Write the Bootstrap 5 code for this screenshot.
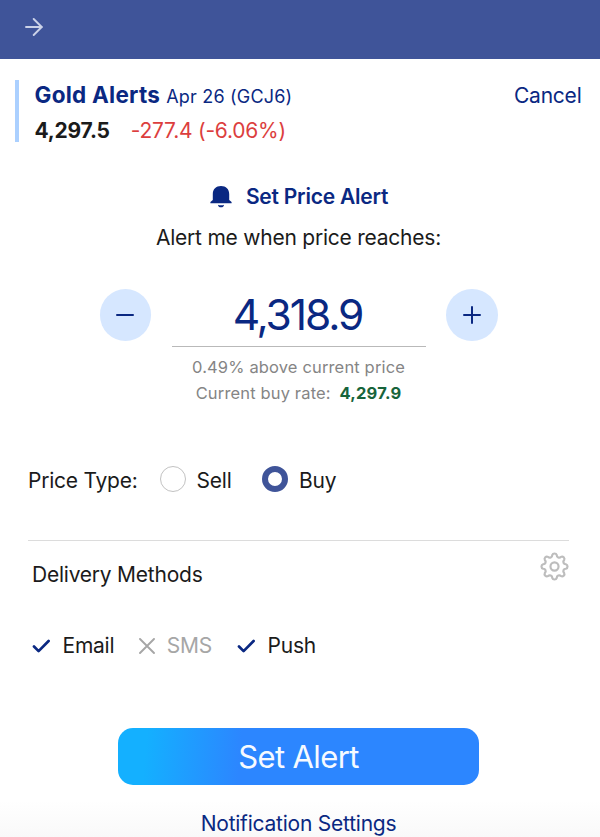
<!DOCTYPE html>
<html lang="en">
<head>
<meta charset="utf-8">
<meta name="viewport" content="width=device-width, initial-scale=1">
<title>Gold Alerts</title>
<link href="https://cdn.jsdelivr.net/npm/bootstrap@5.3.0/dist/css/bootstrap.min.css" rel="stylesheet">
<style>
body{font-family:Inter,"Liberation Sans",sans-serif;color:#1b1b1b;font-size:21px;line-height:30px;letter-spacing:-.23px;height:837px;overflow:hidden;background:linear-gradient(#fff 800px,#f9f9f9 837px)}
svg{display:block;flex:none}
.navy{color:#0a2882}
.topbar{height:59px;background:#3f5499;padding:0 0 5px 25px}
.instrument{margin:21px 18.5px 0 15px;height:62px;border-left:4.5px solid #abd0ff;padding-left:15.5px}
.title{font-size:22.5px;line-height:30px;letter-spacing:.25px}
.contract{font-size:18px;letter-spacing:.2px;margin-left:6px}
.quote-row{line-height:30px;margin-top:3.500px}
.change{color:#dc3e3e;margin-left:21px}
.cancel{line-height:31px}
.set-title{margin-top:40px;padding-right:2px;gap:14px;font-size:inherit;line-height:inherit}
.prompt{margin-top:11px;padding-right:3px}
.stepper{margin-top:36px;padding:0 102.5px 0 99.5px}
.round{width:51.5px;height:51.5px;background:#d6e7ff;border:0}
.amount{width:254px;border-bottom:1.5px solid #b9b9b9;height:58px;font-size:42.5px;line-height:52px;letter-spacing:-2.1px;padding-right:2px}
.hint{font-size:16.5px;line-height:26px;letter-spacing:.15px;color:#858585;padding-right:3px;margin-top:7px}
.rate{color:#17643b;margin-left:4px;letter-spacing:.2px}
.types{margin:60px 0 0 28px;height:26px}
.types .caption-text{padding-top:3px}
.dot{width:26px;height:26px;border:1.5px solid #c2c2c2;border-radius:50%}
.dot.off-state{margin-left:22px}
.dot.on{border:6.5px solid #3f5499;margin-left:30.5px}
.choice{margin-left:11px}
.delivery{margin:48px 31px 0 28px;border-top:1.5px solid #dcdcdc;height:68px;padding:11px 0 0 4px}
.delivery .caption-text{padding-top:8px}
.methods{margin:23px 0 0 32px}
.methods span{margin:0 25px 0 11.5px}
.methods .off{color:#a6a6a6}
.submit,.submit:hover{width:361px;height:57px;border:0;border-radius:15px;color:#f6faff;font-size:31px;line-height:58px;letter-spacing:-.6px;padding:0;margin:67px auto 0 118px;background:linear-gradient(95deg,#14b0ff 8%,#2c86ff 34%)}
.settings{margin-top:24px;padding-right:3px}
</style>
<script src="https://cdn.jsdelivr.net/npm/bootstrap@5.3.0/dist/js/bootstrap.bundle.min.js" defer></script>
</head>
<body>
<header class="topbar d-flex align-items-center">
  <svg width="18" height="18" viewBox="0 0 18 18" fill="none" stroke="#cbd2e8" stroke-width="1.9" stroke-linecap="round" stroke-linejoin="round"><path d="M1 9h16M8.700 1l8 8-8 8"/></svg>
</header>
<main>
  <section class="instrument d-flex justify-content-between align-items-start">
    <div>
      <div class="title navy d-flex align-items-baseline"><span class="fw-bold">Gold Alerts</span><span class="contract">Apr 26 (GCJ6)</span></div>
      <div class="quote-row d-flex"><span class="fw-bold">4,297.5</span><span class="change">-277.4 (-6.06%)</span></div>
    </div>
    <a href="#" class="cancel navy text-decoration-none">Cancel</a>
  </section>
  <h1 class="set-title navy d-flex justify-content-center align-items-center mb-0">
    <svg width="22" height="22" viewBox="0 0 22 22" fill="#0a2882"><path d="M11 0C6 0 2.800 3.200 2.800 8v6L.4 16.100v1.100h21.200v-1.100L19.200 14V8C19.200 3.200 16 0 11 0zM8 18.700c.9.8 5.100.8 6 0 0 1.600-1.300 2.600-3 2.600s-3-1-3-2.600z"/></svg>
    <span class="fw-semibold">Set Price Alert</span>
  </h1>
  <div class="prompt text-center">Alert me when price reaches:</div>
  <div class="stepper d-flex justify-content-between">
    <button class="round rounded-circle d-flex align-items-center justify-content-center p-0" aria-label="Decrease"><svg width="18" height="18" viewBox="0 0 18 18" stroke="#0a2882" stroke-width="2" stroke-linecap="round"><path d="M1 9h16"/></svg></button>
    <div class="amount navy text-center">4,318.9</div>
    <button class="round rounded-circle d-flex align-items-center justify-content-center p-0" aria-label="Increase"><svg width="18" height="18" viewBox="0 0 18 18" stroke="#0a2882" stroke-width="2" stroke-linecap="round"><path d="M1 9h16M9 1v16"/></svg></button>
  </div>
  <div class="hint text-center"><div>0.49% above current price</div><div>Current buy rate: <span class="rate fw-bold">4,297.9</span></div></div>
  <section class="types d-flex align-items-center">
    <span class="caption-text">Price Type:</span>
    <span class="dot off-state"></span><span class="caption-text choice">Sell</span>
    <span class="dot on"></span><span class="caption-text choice">Buy</span>
  </section>
  <section class="delivery d-flex justify-content-between align-items-start">
    <span class="caption-text">Delivery Methods</span>
    <svg width="29" height="29" viewBox="0 0 28 28" fill="none" stroke="#bdbdbd" stroke-width="2.100" stroke-linejoin="round"><circle cx="14" cy="14" r="3.900"/><path d="M24.980 11.810A2.300 2.300 0 0 1 24.980 16.190A2.300 2.300 0 0 0 23.310 20.220A2.300 2.300 0 0 1 20.220 23.310A2.300 2.300 0 0 0 16.190 24.980A2.300 2.300 0 0 1 11.810 24.980A2.300 2.300 0 0 0 7.780 23.310A2.300 2.300 0 0 1 4.690 20.220A2.300 2.300 0 0 0 3.020 16.190A2.300 2.300 0 0 1 3.020 11.810A2.300 2.300 0 0 0 4.690 7.780A2.300 2.300 0 0 1 7.780 4.690A2.300 2.300 0 0 0 11.810 3.020A2.300 2.300 0 0 1 16.190 3.020A2.300 2.300 0 0 0 20.220 4.690A2.300 2.300 0 0 1 23.310 7.780A2.300 2.300 0 0 0 24.980 11.810z"/></svg>
  </section>
  <section class="methods d-flex align-items-center">
    <svg width="19" height="14" viewBox="0 0 19 14" fill="none" stroke="#0a2882" stroke-width="2.700" stroke-linecap="round" stroke-linejoin="round"><path d="M2 7.500l4.600 4.600L16.600 2"/></svg>
    <span>Email</span>
    <svg width="16" height="16" viewBox="0 0 16 16" stroke="#a6a6a6" stroke-width="1.900" stroke-linecap="round"><path d="M1 1l14 14M15 1L1 15"/></svg>
    <span class="off">SMS</span>
    <svg width="19" height="14" viewBox="0 0 19 14" fill="none" stroke="#0a2882" stroke-width="2.700" stroke-linecap="round" stroke-linejoin="round"><path d="M2 7.500l4.600 4.600L16.600 2"/></svg>
    <span>Push</span>
  </section>
  <button class="submit btn d-block">Set Alert</button>
  <div class="settings text-center"><a href="#" class="navy text-decoration-none">Notification Settings</a></div>
</main>
</body>
</html>
